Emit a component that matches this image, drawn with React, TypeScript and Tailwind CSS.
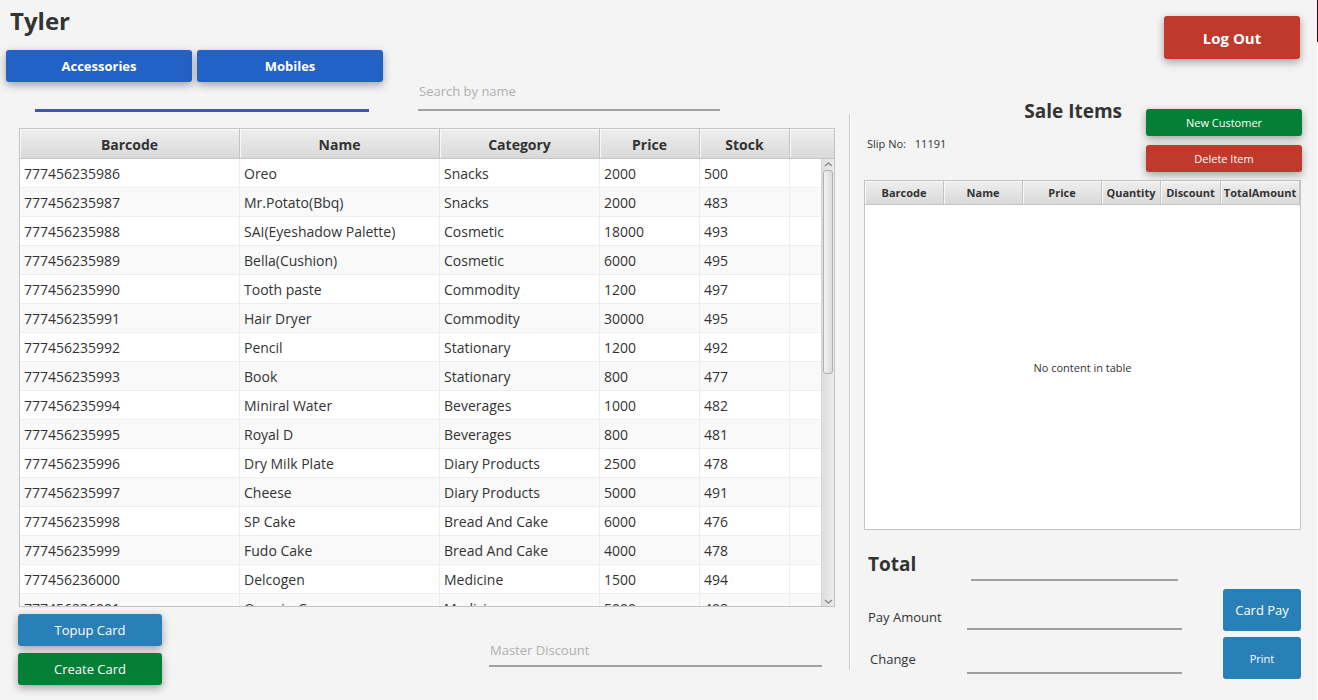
const products: [string, string, string, number, number][] = [
  ["777456235986", "Oreo", "Snacks", 2000, 500],
  ["777456235987", "Mr.Potato(Bbq)", "Snacks", 2000, 483],
  ["777456235988", "SAI(Eyeshadow Palette)", "Cosmetic", 18000, 493],
  ["777456235989", "Bella(Cushion)", "Cosmetic", 6000, 495],
  ["777456235990", "Tooth paste", "Commodity", 1200, 497],
  ["777456235991", "Hair Dryer", "Commodity", 30000, 495],
  ["777456235992", "Pencil", "Stationary", 1200, 492],
  ["777456235993", "Book", "Stationary", 800, 477],
  ["777456235994", "Miniral Water", "Beverages", 1000, 482],
  ["777456235995", "Royal D", "Beverages", 800, 481],
  ["777456235996", "Dry Milk Plate", "Diary Products", 2500, 478],
  ["777456235997", "Cheese", "Diary Products", 5000, 491],
  ["777456235998", "SP Cake", "Bread And Cake", 6000, 476],
  ["777456235999", "Fudo Cake", "Bread And Cake", 4000, 478],
  ["777456236000", "Delcogen", "Medicine", 1500, 494],
  ["777456236001", "Oramin-C", "Medicine", 5000, 498],
];

const buttonBase = "rounded-[3px] pt-0.5 text-white";
const raised = "shadow-[0_3px_8px_rgba(0,0,0,0.35)]";
const headCell =
  "border-r border-b border-[#c4c4c4] bg-linear-to-b from-[#efefef] to-[#d9d9d9] px-0 pt-0.5 pb-0 font-bold shadow-[inset_1px_1px_0_#f8f8f8]";
const lineInput =
  "block h-[29px] border-b-2 border-[#a0a0a0] bg-transparent px-px text-[13px] leading-[18px] outline-none placeholder:text-[#b0b0b0]";

function ProductTable() {
  return (
    <div className="relative h-[479px] overflow-hidden border border-[#c4c4c4] bg-white">
      <table className="w-full table-fixed border-separate border-spacing-0 text-sm">
        <colgroup>
          <col className="w-[220px]" />
          <col className="w-[200px]" />
          <col className="w-[160px]" />
          <col className="w-[100px]" />
          <col className="w-[90px]" />
          <col />
        </colgroup>
        <thead>
          <tr className="h-[30px]">
            {["Barcode", "Name", "Category", "Price", "Stock"].map((h) => (
              <th key={h} className={headCell}>{h}</th>
            ))}
            <td className="border-b border-[#c4c4c4] bg-linear-to-b from-[#efefef] to-[#d9d9d9] shadow-[inset_1px_1px_0_#f8f8f8]" />
          </tr>
        </thead>
        <tbody>
          {products.map((row) => (
            <tr key={row[0]} className="h-[29px] even:bg-[#f9f9f9]">
              {row.map((cell, i) => (
                <td key={i} className="border-r border-b border-[#ededed] px-1 pt-0.5 pb-0 whitespace-nowrap">{cell}</td>
              ))}
              <td className="border-b border-[#ededed] p-0" />
            </tr>
          ))}
        </tbody>
      </table>
      <div className="absolute top-[30px] right-0 bottom-0 flex w-[13px] flex-col items-center border-l border-[#d4d4d4] bg-linear-to-r from-[#dedede] to-[#ececec]">
        <svg className="my-[2px] h-[7px] w-[9px]" viewBox="0 0 9 7" fill="none" stroke="#8c8c8c" strokeWidth="1.5">
          <path d="M1 5 4.500 2 8 5" />
        </svg>
        <div className="h-[204px] w-[10px] rounded-[3px] border border-[#b0b0b0] bg-linear-to-r from-[#f2f2f2] to-[#dcdcdc]" />
        <svg className="mt-auto mb-px h-[7px] w-[9px]" viewBox="0 0 9 7" fill="none" stroke="#8c8c8c" strokeWidth="1.5">
          <path d="M1 2 4.500 5 8 2" />
        </svg>
      </div>
    </div>
  );
}

function SaleTable() {
  return (
    <div className="flex h-[350px] flex-col border border-[#c4c4c4] bg-white">
      <table className="w-full table-fixed border-separate border-spacing-0 text-[11px]">
        <colgroup>
          <col className="w-[79px]" />
          <col className="w-[79px]" />
          <col className="w-[79px]" />
          <col className="w-[59px]" />
          <col className="w-[60px]" />
          <col />
        </colgroup>
        <thead>
          <tr className="h-6">
            {["Barcode", "Name", "Price", "Quantity", "Discount", "TotalAmount"].map((h) => (
              <th key={h} className={headCell}>{h}</th>
            ))}
          </tr>
        </thead>
      </table>
      <p className="flex flex-1 items-center justify-center pt-0.5 text-[11px]">No content in table</p>
    </div>
  );
}

export default function App() {
  return (
    <div className="flex min-h-screen bg-[#f4f4f4] font-['Open_Sans','Noto_Sans',sans-serif] text-[#333]">
      <main className="min-w-[835px] flex-1 pr-[14px]">
        <h1 className="h-[50px] pl-[10px] text-2xl leading-[42px] font-bold">Tyler</h1>
        <div className="flex gap-[5px] pl-[6px]">
          <button className={`${buttonBase} ${raised} h-8 w-[186px] bg-[#2261c6] text-[13px] font-bold`}>Accessories</button>
          <button className={`${buttonBase} ${raised} h-8 w-[186px] bg-[#2261c6] text-[13px] font-bold`}>Mobiles</button>
        </div>
        <div className="flex h-[46px] items-start gap-[49px] pl-[35px]">
          <input aria-label="Barcode" className="h-[30px] w-[334px] border-b-[3px] border-[#4059a9] bg-transparent px-px text-[13px] outline-none" />
          <input aria-label="Search by name" placeholder="Search by name" className={`${lineInput} w-[302px] pb-[9px]`} />
        </div>
        <div className="pl-[19px]">
          <ProductTable />
        </div>
        <div className="flex items-start justify-between pt-[7px] pr-[13px] pl-[18px]">
          <div className="flex flex-col gap-[7px]">
            <button className={`${buttonBase} ${raised} h-8 w-36 bg-[#2980b9] text-[13px]`}>Topup Card</button>
            <button className={`${buttonBase} ${raised} h-8 w-36 bg-[#038036] text-[13px]`}>Create Card</button>
          </div>
          <input aria-label="Master Discount" placeholder="Master Discount" className={`${lineInput} mt-6 w-[333px] pb-1`} />
        </div>
      </main>

      <div className="mt-[114px] mb-[30px] w-[2px] border-l border-[#c8c8c8] bg-white" />

      <aside className="w-[466px] shrink-0 pt-4 pr-4 pl-[13px]">
        <div className="flex justify-end pr-px">
          <button className={`${buttonBase} ${raised} h-[43px] w-[136px] bg-[#c0392b] text-[15px] font-bold`}>Log Out</button>
        </div>
        <div className="mt-[50px] -mr-px flex h-[71px] justify-between">
          <p className="pt-[26px] pl-[3px] text-[11px] leading-[18px]">
            Slip No: <span className="ml-[6px]">11191</span>
          </p>
          <div className="flex gap-6">
            <h2 className="text-[19px] leading-[4px] font-bold">Sale Items</h2>
            <div className="flex flex-col gap-[9px]">
              <button className={`${buttonBase} ${raised} h-[27px] w-[156px] bg-[#038036] text-[11px]`}>New Customer</button>
              <button className={`${buttonBase} ${raised} h-[27px] w-[156px] bg-[#c0392b] text-[11px]`}>Delete Item</button>
            </div>
          </div>
        </div>
        <SaleTable />
        <div className="flex justify-between pl-1">
          <form className="text-[13px]">
            <div className="flex h-[51px] items-end">
              <label htmlFor="total" className="w-[103px] text-[19px] leading-[34px] font-bold">Total</label>
              <input id="total" className={`${lineInput} w-[207px]`} />
            </div>
            <div className="flex h-[49px] items-end">
              <label htmlFor="pay" className="w-[99px] leading-[26px]">Pay Amount</label>
              <input id="pay" className={`${lineInput} w-[215px]`} />
            </div>
            <div className="flex h-11 items-end">
              <label htmlFor="change" className="w-[99px] pl-[2px] leading-[30px]">Change</label>
              <input id="change" className={`${lineInput} w-[215px]`} />
            </div>
          </form>
          <div className="flex flex-col gap-[6px] pt-[59px]">
            <button className={`${buttonBase} h-[42px] w-[78px] bg-[#2980b9] text-[13px]`}>Card Pay</button>
            <button className={`${buttonBase} h-[42px] w-[78px] bg-[#2980b9] text-[11px]`}>Print</button>
          </div>
        </div>
      </aside>

      <div className="w-px bg-white">
        <div className="h-[42px] bg-[#3a0505]" />
      </div>
    </div>
  );
}
